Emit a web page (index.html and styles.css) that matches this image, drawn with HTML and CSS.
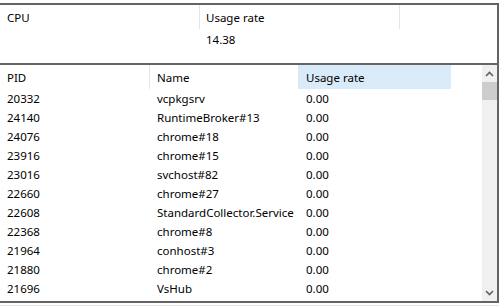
FILE: index.html
```html
<!DOCTYPE html>
<html lang="en">
<head>
    <meta charset="UTF-8">
    <title>CPU usage</title>
    <link rel="stylesheet" href="styles.css">
</head>
<body>
    <div class="panel">
        <div class="summary">
            <div class="summary-head">
                <div class="cell sep">CPU</div>
                <div class="cell sep">Usage rate</div>
                <div class="cell"></div>
            </div>
            <div class="summary-row">
                <div class="cell"></div>
                <div class="cell">14.38</div>
                <div class="cell"></div>
            </div>
        </div>

        <div class="list">
            <div class="table">
                <div class="row head">
                    <div class="cell sep">PID</div>
                    <div class="cell sep">Name</div>
                    <div class="cell hover">Usage rate</div>
                    <div class="cell"></div>
                </div>
                <div class="row"><div class="cell">20332</div><div class="cell">vcpkgsrv</div><div class="cell">0.00</div></div>
                <div class="row"><div class="cell">24140</div><div class="cell">RuntimeBroker#13</div><div class="cell">0.00</div></div>
                <div class="row"><div class="cell">24076</div><div class="cell">chrome#18</div><div class="cell">0.00</div></div>
                <div class="row"><div class="cell">23916</div><div class="cell">chrome#15</div><div class="cell">0.00</div></div>
                <div class="row"><div class="cell">23016</div><div class="cell">svchost#82</div><div class="cell">0.00</div></div>
                <div class="row"><div class="cell">22660</div><div class="cell">chrome#27</div><div class="cell">0.00</div></div>
                <div class="row"><div class="cell">22608</div><div class="cell">StandardCollector.Service</div><div class="cell">0.00</div></div>
                <div class="row"><div class="cell">22368</div><div class="cell">chrome#8</div><div class="cell">0.00</div></div>
                <div class="row"><div class="cell">21964</div><div class="cell">conhost#3</div><div class="cell">0.00</div></div>
                <div class="row"><div class="cell">21880</div><div class="cell">chrome#2</div><div class="cell">0.00</div></div>
                <div class="row"><div class="cell">21696</div><div class="cell">VsHub</div><div class="cell">0.00</div></div>
            </div>

            <div class="scrollbar">
                <div class="arrow">
                    <svg width="9" height="6" viewBox="0 0 9 6"><polyline points="1,5 4.5,1.5 8,5" fill="none" stroke="#606060" stroke-width="1.6"/></svg>
                </div>
                <div class="thumb"></div>
                <div class="track"></div>
                <div class="arrow">
                    <svg width="9" height="6" viewBox="0 0 9 6"><polyline points="1,1 4.5,4.5 8,1" fill="none" stroke="#606060" stroke-width="1.6"/></svg>
                </div>
            </div>
        </div>
    </div>
    <div class="foot"></div>
</body>
</html>
```

FILE: styles.css
```css
* {
    margin: 0;
    padding: 0;
    box-sizing: border-box;
}

body {
    font-family: "Noto Sans", sans-serif;
    font-size: 11.5px;
    color: #000;
    background: #fff;
    overflow: hidden;
}

.panel {
    margin-top: 3px;
    border-top: 2px solid #646464;
    border-right: 2px solid #646464;
}

.summary {
    height: 60px;
    border-bottom: 2px solid #646464;
}

.summary-head,
.summary-row {
    display: grid;
    grid-template-columns: 200px 200px 1fr;
}

.summary-head {
    height: 24px;
}

.summary-row {
    height: 21px;
}

.cell {
    padding-left: 7px;
    display: flex;
    align-items: center;
    white-space: nowrap;
    overflow: hidden;
}

.summary .cell:nth-child(2) {
    padding-left: 6px;
}

.sep {
    border-right: 1px solid #e5e5e5;
}

.list {
    display: flex;
    height: 238px;
    border-bottom: 2px solid #646464;
}

.table {
    flex: 1;
    overflow: hidden;
}

.row {
    display: grid;
    grid-template-columns: 150px 149px 152px 1fr;
    height: 19px;
}

.row.head {
    height: 24px;
}

.hover {
    background: #d9ebf9;
}

.scrollbar {
    width: 15px;
    background: #f0f0f0;
    display: flex;
    flex-direction: column;
}

.arrow {
    height: 17px;
    display: flex;
    align-items: center;
    justify-content: center;
}

.thumb {
    height: 18px;
    background: #cdcdcd;
}

.track {
    flex: 1;
}

.foot {
    height: 3px;
    border-bottom: 1px solid #e6e6e6;
}
```
